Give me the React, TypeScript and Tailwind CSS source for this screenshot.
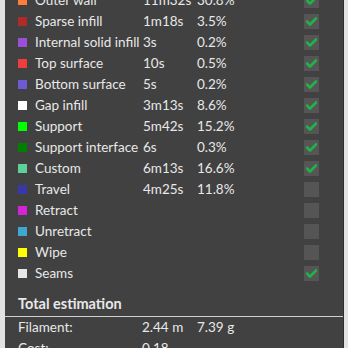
import React from "react";

type Row = { name: string; color: string; time?: string; pct?: string; checked?: boolean };

const rows: Row[] = [
  { name: "Outer wall", color: "#ff7d38", time: "11m32s", pct: "30.8%", checked: true },
  { name: "Sparse infill", color: "#b02a2a", time: "1m18s", pct: "3.5%", checked: true },
  { name: "Internal solid infill", color: "#9a4fd6", time: "3s", pct: "0.2%", checked: true },
  { name: "Top surface", color: "#f03c3c", time: "10s", pct: "0.5%", checked: true },
  { name: "Bottom surface", color: "#6e5ad2", time: "5s", pct: "0.2%", checked: true },
  { name: "Gap infill", color: "#ffffff", time: "3m13s", pct: "8.6%", checked: true },
  { name: "Support", color: "#00ff00", time: "5m42s", pct: "15.2%", checked: true },
  { name: "Support interface", color: "#008000", time: "6s", pct: "0.3%", checked: true },
  { name: "Custom", color: "#5ed19a", time: "6m13s", pct: "16.6%", checked: true },
  { name: "Travel", color: "#3838aa", time: "4m25s", pct: "11.8%", checked: false },
  { name: "Retract", color: "#d524d5", checked: false },
  { name: "Unretract", color: "#40a8d0", checked: false },
  { name: "Wipe", color: "#ffff00", checked: false },
  { name: "Seams", color: "#e6e6e6", checked: true },
];

function Check({ checked }: { checked?: boolean }) {
  return (
    <div className="w-[15px] h-[15px] bg-[#555555] flex items-center justify-center">
      {checked && (
        <svg width="11" height="9" viewBox="0 0 11 9">
          <path d="M1 4.5 L4 7.5 L10 1.5" stroke="#1fb34a" strokeWidth="2.6" fill="none" strokeLinecap="round" strokeLinejoin="round" />
        </svg>
      )}
    </div>
  );
}

export default function App() {
  return (
    <div className="w-[348px] h-[348px] overflow-hidden bg-[#e2e2e2] flex" style={{ fontFamily: 'Lato, "Noto Sans", sans-serif' }}>
      <div className="ml-[5px] w-[339px] h-full overflow-hidden bg-[#414141] border-r border-[#2e2e2e] text-[13.5px] text-[#e8e8e8] flex flex-col">
        <div className="shrink-0 flex flex-col mt-[-10px]">
          {rows.map((r) => (
            <div key={r.name} className="shrink-0 h-[21px] flex items-center">
              <div className="ml-[13px] w-[9px] h-[9px]" style={{ backgroundColor: r.color }} />
              <div className="ml-[8px] w-[108px] whitespace-nowrap leading-none">{r.name}</div>
              <div className="w-[54px] leading-none">{r.time ?? ""}</div>
              <div className="w-[107px] leading-none">{r.pct ?? ""}</div>
              <Check checked={r.checked} />
            </div>
          ))}
        </div>
        <div className="shrink-0 mt-[10px] h-[21px] flex items-center pl-[13px] font-bold text-[14.5px] leading-none">Total estimation</div>
        <div className="shrink-0 mt-[1px] h-[1px] bg-[#cfcfcf]" />
        <div className="shrink-0 h-[21px] flex items-center pl-[13px] leading-none">
          <div className="w-[124px]">Filament:</div>
          <div className="w-[55px]">2.44 m</div>
          <div>7.39 g</div>
        </div>
        <div className="shrink-0 h-[21px] flex items-center pl-[13px] leading-none">
          <div className="w-[124px]">Cost:</div>
          <div>0.18</div>
        </div>
      </div>
    </div>
  );
}
